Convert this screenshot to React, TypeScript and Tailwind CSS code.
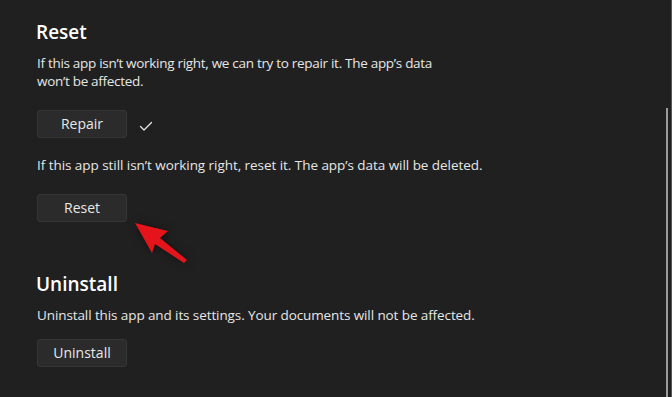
import React from 'react';

function WinButton({ label }: { label: string }) {
  return (
    <button className="w-[90px] h-[28px] rounded-[3px] border border-[#363636] bg-[#2b2b2b] text-[14px] text-[#e8e8e8] leading-none">
      {label}
    </button>
  );
}

export default function App() {
  return (
    <div
      className="relative w-[672px] h-[397px] overflow-hidden bg-[#202020] pl-[37px] pt-[18px] text-[#e6e6e6]"
      style={{ fontFamily: '"Segoe UI", "Open Sans", sans-serif' }}
    >
      {/* Reset section */}
      <h2 className="text-[19px] font-semibold leading-[28px] text-white -ml-px">Reset</h2>
      <p className="mt-[8px] w-[425px] text-[13.5px] tracking-[-0.3px] leading-[18px]">
        If this app isn’t working right, we can try to repair it. The app’s data won’t be affected.
      </p>
      <div className="mt-[20px] flex items-center gap-[12px]">
        <WinButton label="Repair" />
        <svg className="w-[14px] h-[14px] mt-[4px]" viewBox="0 0 14 14" fill="none">
          <path d="M1.5 7.5 L5 11 L12.5 3.5" stroke="#e6e6e6" strokeWidth="1.3" strokeLinecap="round" strokeLinejoin="round" />
        </svg>
      </div>
      <p className="mt-[18px] text-[13.5px] tracking-[-0.05px] leading-[18px]">
        If this app still isn’t working right, reset it. The app’s data will be deleted.
      </p>
      <div className="mt-[20px]">
        <WinButton label="Reset" />
      </div>

      {/* Uninstall section */}
      <h2 className="mt-[48px] text-[19px] font-semibold leading-[28px] text-white -ml-px">Uninstall</h2>
      <p className="mt-[8px] text-[13.5px] tracking-[-0.1px] leading-[18px]">
        Uninstall this app and its settings. Your documents will not be affected.
      </p>
      <div className="mt-[15px]">
        <WinButton label="Uninstall" />
      </div>

      {/* red annotation arrow */}
      <svg className="absolute left-0 top-0 w-[672px] h-[397px] pointer-events-none" viewBox="0 0 672 397">
        <polygon
          points="135,223 168,231 160,238 187,260 184,263 155,244 152,253"
          fill="#e4141a"
          style={{ filter: 'drop-shadow(0 0 4px rgba(0,0,0,0.5))' }}
        />
      </svg>

      {/* scrollbar + window edge */}
      <div className="absolute right-[4px] top-[108px] bottom-0 w-[2px] bg-[#9b9b9b]" />
      <div className="absolute right-0 top-0 bottom-0 w-px bg-[#6b5820]" />
    </div>
  );
}
